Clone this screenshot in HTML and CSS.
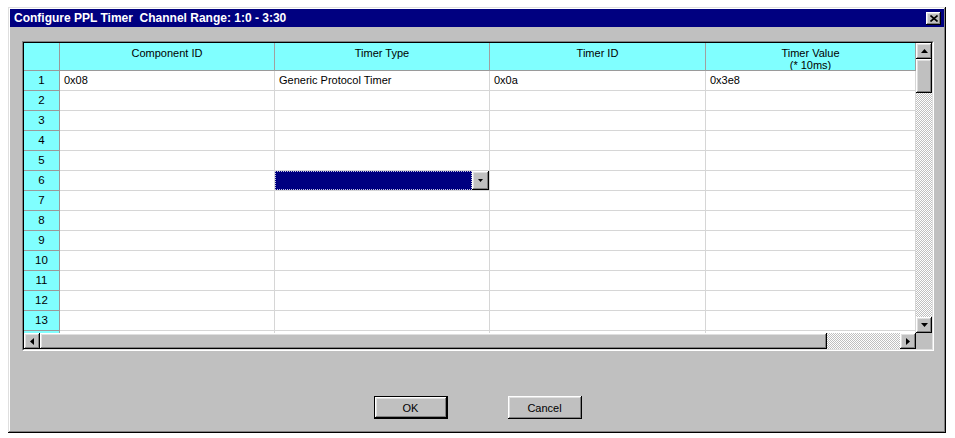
FILE: index.html
```html
<!DOCTYPE html>
<html>
<head>
<meta charset="utf-8">
<title>Configure PPL Timer</title>
<link rel="stylesheet" href="styles.css">
</head>
<body>
<div class="window">
  <div class="titlebar">
    <span class="title">Configure PPL Timer&nbsp; Channel Range: 1:0 - 3:30</span>
    <span class="close btn3d"><svg width="8" height="7" viewBox="0 0 8 7"><path d="M0.5 0.5 L7.5 6.5 M7.5 0.5 L0.5 6.5" stroke="#000" stroke-width="1.6"/></svg></span>
  </div>
  <div class="content">
    <div class="frame">
      <div class="frame-inner">
        <div class="grid-top">
          <div class="viewport">
            <div class="row head">
              <div class="cell rh"></div>
              <div class="cell hc">Component ID</div>
              <div class="cell hc">Timer Type</div>
              <div class="cell hc">Timer ID</div>
              <div class="cell hc">Timer Value<br>(* 10ms)</div>
            </div>
            <div class="row"><div class="cell rh">1</div><div class="cell">0x08</div><div class="cell">Generic Protocol Timer</div><div class="cell">0x0a</div><div class="cell">0x3e8</div></div>
            <div class="row"><div class="cell rh">2</div><div class="cell"></div><div class="cell"></div><div class="cell"></div><div class="cell"></div></div>
            <div class="row"><div class="cell rh">3</div><div class="cell"></div><div class="cell"></div><div class="cell"></div><div class="cell"></div></div>
            <div class="row"><div class="cell rh">4</div><div class="cell"></div><div class="cell"></div><div class="cell"></div><div class="cell"></div></div>
            <div class="row"><div class="cell rh">5</div><div class="cell"></div><div class="cell"></div><div class="cell"></div><div class="cell"></div></div>
            <div class="row"><div class="cell rh">6</div><div class="cell"></div><div class="cell combo-cell"><div class="combo"><div class="combo-field"></div><div class="combo-btn btn3d"><svg width="5" height="3" viewBox="0 0 5 3"><polygon points="0,0 5,0 2.5,3" fill="#000"/></svg></div></div></div><div class="cell"></div><div class="cell"></div></div>
            <div class="row"><div class="cell rh">7</div><div class="cell"></div><div class="cell"></div><div class="cell"></div><div class="cell"></div></div>
            <div class="row"><div class="cell rh">8</div><div class="cell"></div><div class="cell"></div><div class="cell"></div><div class="cell"></div></div>
            <div class="row"><div class="cell rh">9</div><div class="cell"></div><div class="cell"></div><div class="cell"></div><div class="cell"></div></div>
            <div class="row"><div class="cell rh">10</div><div class="cell"></div><div class="cell"></div><div class="cell"></div><div class="cell"></div></div>
            <div class="row"><div class="cell rh">11</div><div class="cell"></div><div class="cell"></div><div class="cell"></div><div class="cell"></div></div>
            <div class="row"><div class="cell rh">12</div><div class="cell"></div><div class="cell"></div><div class="cell"></div><div class="cell"></div></div>
            <div class="row"><div class="cell rh">13</div><div class="cell"></div><div class="cell"></div><div class="cell"></div><div class="cell"></div></div>
            <div class="row"><div class="cell rh"></div><div class="cell"></div><div class="cell"></div><div class="cell"></div><div class="cell"></div></div>
          </div>
          <div class="vscroll">
            <div class="sbtn btn3d"><svg width="7" height="4" viewBox="0 0 7 4"><polygon points="3.5,0 7,4 0,4" fill="#000"/></svg></div>
            <div class="vthumb btn3d"></div>
            <div class="track"></div>
            <div class="sbtn btn3d"><svg width="7" height="4" viewBox="0 0 7 4"><polygon points="0,0 7,0 3.5,4" fill="#000"/></svg></div>
          </div>
        </div>
        <div class="hscroll">
          <div class="sbtn btn3d"><svg width="4" height="7" viewBox="0 0 4 7"><polygon points="4,0 4,7 0,3.5" fill="#000"/></svg></div>
          <div class="hthumb btn3d"></div>
          <div class="track"></div>
          <div class="sbtn btn3d"><svg width="4" height="7" viewBox="0 0 4 7"><polygon points="0,0 4,3.5 0,7" fill="#000"/></svg></div>
          <div class="corner"></div>
        </div>
      </div>
    </div>
    <div class="buttons">
      <div class="pbtn default"><div class="pbtn-face btn3d">OK</div></div>
      <div class="pbtn"><div class="pbtn-face btn3d">Cancel</div></div>
    </div>
  </div>
</div>
</body>
</html>
```
FILE: styles.css
```css
html, body {
  margin: 0;
  padding: 0;
  background: #ffffff;
}
body {
  font-family: "Liberation Sans", Arial, sans-serif;
  font-size: 11px;
  color: #000;
}
.window {
  margin: 7px 0 0 8px;
  width: 938px;
  height: 426px;
  box-sizing: border-box;
  padding: 2px;
  background: #c0c0c0;
  box-shadow: inset -1px -1px #000, inset 1px 1px #dfdfdf, inset -2px -2px #808080, inset 2px 2px #fff;
}
.titlebar {
  height: 18px;
  background: #000080;
  display: flex;
  align-items: center;
  justify-content: space-between;
  padding: 0 3px 0 4px;
}
.title {
  color: #fff;
  font-weight: bold;
  font-size: 12px;
  white-space: pre;
}
.btn3d {
  background: #c0c0c0;
  box-shadow: inset -1px -1px #000, inset 1px 1px #fff, inset -2px -2px #808080, inset 2px 2px #dfdfdf;
  box-sizing: border-box;
}
.close {
  width: 15px;
  height: 13px;
  display: flex;
  align-items: center;
  justify-content: center;
}
.content {
  padding: 14px 10px 0 12px;
}
.frame {
  width: 912px;
  height: 310px;
  box-sizing: border-box;
  border: 1px solid;
  border-color: #808080 #fff #fff #808080;
}
.frame-inner {
  height: 100%;
  box-sizing: border-box;
  border: 1px solid;
  border-color: #000 #dfdfdf #dfdfdf #000;
  display: flex;
  flex-direction: column;
  background: #fff;
}
.grid-top {
  display: flex;
  height: 290px;
}
.viewport {
  width: 892px;
  height: 290px;
  overflow: hidden;
  background: #fff;
}
.row {
  display: grid;
  grid-template-columns: 36px 215px 215px 216px 210px;
  height: 20px;
}
.row.head { height: 28px; }
.cell {
  box-sizing: border-box;
  border-right: 1px solid #d6d6d6;
  border-bottom: 1px solid #d6d6d6;
  padding: 3px 4px 0 4px;
  line-height: 12px;
  white-space: nowrap;
  overflow: hidden;
}
.cell.rh {
  background: #80ffff;
  text-align: center;
  border-right-color: #9a9a9a;
  border-bottom-color: #9a9a9a;
  font-size: 11.5px;
  padding: 3px 0 0 0;
}
.cell.hc {
  background: #80ffff;
  text-align: center;
  border-right-color: #a0a0a0;
  border-bottom-color: #9a9a9a;
  padding-top: 4px;
}
.combo-cell { padding: 0; }
.combo {
  display: flex;
  height: 19px;
}
.combo-field {
  flex: 1;
  background: #000080;
  border: 1px dotted #c8c8e0;
}
.combo-btn {
  width: 17px;
  height: 19px;
  display: flex;
  align-items: center;
  justify-content: center;
}
.vscroll {
  width: 16px;
  display: flex;
  flex-direction: column;
}
.sbtn {
  width: 16px;
  height: 16px;
  flex: none;
  display: flex;
  align-items: center;
  justify-content: center;
}
.vthumb {
  height: 34px;
  flex: none;
}
.track {
  flex: 1;
  background-color: #c0c0c0;
  background-image: conic-gradient(#fff 25%, #c0c0c0 0 50%, #fff 0 75%, #c0c0c0 0);
  background-size: 2px 2px;
}
.hscroll {
  display: flex;
  height: 16px;
}
.hthumb {
  width: 787px;
  flex: none;
}
.corner {
  width: 16px;
  background: #c0c0c0;
}
.buttons {
  display: flex;
  justify-content: center;
  gap: 60px;
  margin-top: 45px;
  padding-right: 1px;
}
.pbtn {
  width: 74px;
  height: 23px;
  box-sizing: border-box;
}
.pbtn.default {
  border: 1px solid #000;
}
.pbtn-face {
  width: 100%;
  height: 100%;
  display: flex;
  align-items: center;
  justify-content: center;
}
```
